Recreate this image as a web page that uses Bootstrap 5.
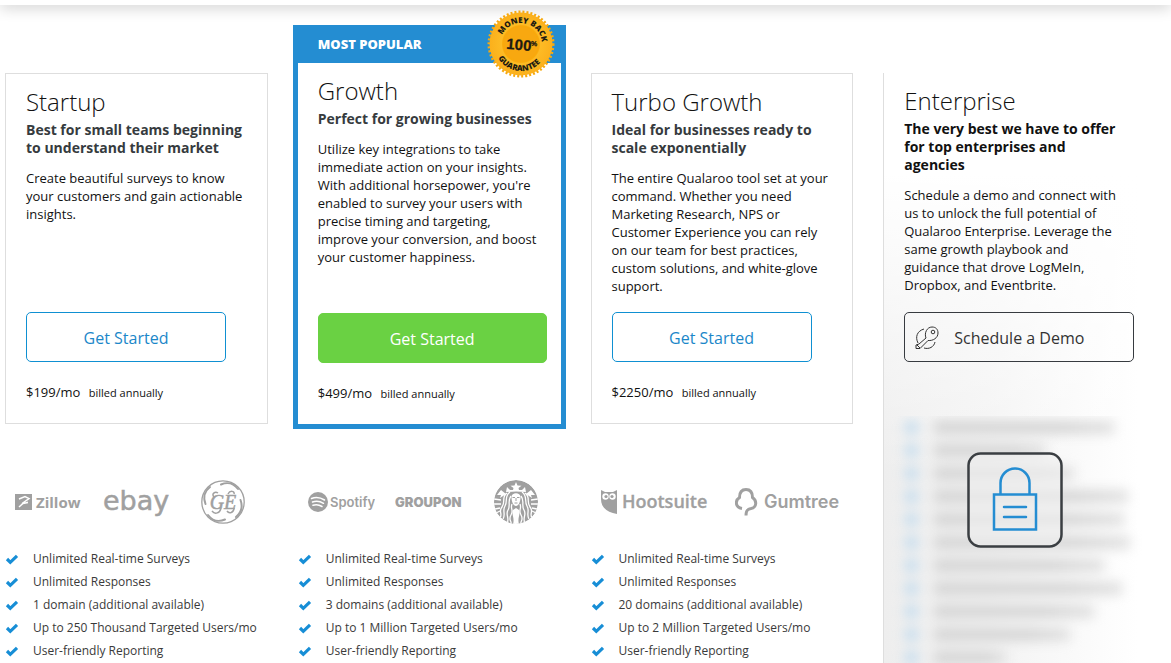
<!DOCTYPE html>
<html lang="en">
<head>
<meta charset="utf-8">
<meta name="viewport" content="width=device-width, initial-scale=1">
<title>Pricing</title>
<link href="https://cdn.jsdelivr.net/npm/bootstrap@5.3.0/dist/css/bootstrap.min.css" rel="stylesheet">
<style>
  body { font-family: "Open Sans", "Noto Sans", sans-serif; font-size: 13px; line-height: 18px; color: #111; background: #fff; }
  .top-bar { height: 5px; background: #fff; box-shadow: 0 0 15px rgba(0,0,0,.42); }
  .plans { display: grid; grid-template-columns: repeat(4, minmax(0, 1fr)); padding-top: 20px; }
  .plan-wrap { padding: 48px 25px 5px 5px; }
  .plan-wrap.popular { padding: 0 20px 0 0; }
  .plan { border: 1px solid #dedede; border-radius: 0; padding: 13px 20px 21px; color: inherit; }
  .popular .plan { border: 5px solid #248dd2; border-top: 0; padding: 0 14px 21px 20px; }
  .popular .desc { padding-right: 6px; }
  .ribbon { background: #248dd2; color: #fff; font-weight: 800; font-size: 13px; height: 38px; margin: 0 -14px 13px -20px; padding: 0 20px 1px; }
  .seal { position: absolute; top: -16px; right: 5px; width: 70px; height: 70px; }
  h2 { font-size: 24px; line-height: 30px; font-weight: 300; margin: 0 0 4px; }
  h3 { font-size: 14px; line-height: 18px; font-weight: 700; color: #363b3e; margin: 0 0 12px; }
  .desc { margin: 0 0 17px; }
  .cta { height: 50px; width: 100%; max-width: 200px; font-size: 16px; border-radius: 5px; padding: 2px 0 0; color: #1b87c9; border: 1px solid #0f90d2; background: #fff; margin-bottom: 21px; }
  .cta:hover { color: #fff; background: #248dd2; }
  .cta-go { max-width: none; color: #fff; background: #6ad143; border-color: #6ad143; font-weight: 500; }
  .billing { font-size: 11px; margin-left: 5px; }
  .perks { padding: 51px 0 1px 5px; }
  .logos { height: 44px; padding-left: 10px; margin-bottom: 23px; gap: 20px; }
  .logos svg { fill: #a0a0a0; flex: none; }
  .logos .emblem { margin-left: 11px; }
  .ticks { font-size: 12px; line-height: 23px; color: #3a3a3a; }
  .ticks li { display: flex; align-items: center; gap: 14px; }
  .enterprise { grid-column: 4; grid-row: 1 / span 2; margin: 48px 25px 0 5px; border-left: 1px solid #dedede;
    background: linear-gradient(to bottom, #fff 100px, rgba(255,255,255,0) 400px), linear-gradient(to right, #eee, #f3f3f3 40%, #fff 97%); }
  .enterprise-text { padding: 13px 12px 0 20px; }
  .enterprise h3 { color: #111; padding-right: 16px; }
  .enterprise .desc { margin-bottom: 18px; padding-right: 8px; }
  .cta-demo { max-width: 230px; margin: 0; padding-left: 10px; gap: 15px; color: #333; border-color: #373b40; background: none; }
  .cta-demo:hover { background: #373b40; }
  .locked { margin-top: 54px; overflow: hidden; min-height: 200px; }
  .ghosts { position: absolute; inset: 0 12px auto 20px; filter: blur(6px); }
  .ghost { display: flex; align-items: center; height: 23px; gap: 15px; }
  .ghost-dot { flex: none; width: 15px; height: 15px; border-radius: 50%; background: #c8deee; }
  .ghost-track { flex: 1; }
  .ghost-bar { height: 13px; background: linear-gradient(to right, #d5d5d5 70%, #e2e2e2); }
  .lock { position: absolute; top: 36px; width: 96px; height: 96px; }
  @media (max-width: 900px) {
    .plans { grid-template-columns: 1fr; }
    .perks, .plan-wrap, .enterprise { grid-column: 1; grid-row: auto; }
  }
</style>
</head>
<body>
<svg width="0" height="0" class="position-absolute" aria-hidden="true">
  <symbol id="tick" viewBox="0 0 14 12"><path d="M2 6 5.300 9.300 12 2.800" fill="none" stroke="#178ed6" stroke-width="3.200"/></symbol>
</svg>
<header class="top-bar"></header>
<main class="plans">
  <section class="plan-wrap d-flex">
    <div class="card plan w-100">
      <h2>Startup</h2>
      <h3>Best for small teams beginning to understand their market</h3>
      <p class="desc">Create beautiful surveys to know your customers and gain actionable insights.</p>
      <button type="button" class="btn cta mt-auto">Get Started</button>
      <div>$199/mo <span class="billing">billed annually</span></div>
    </div>
  </section>

  <section class="plan-wrap popular d-flex">
    <div class="card plan w-100">
      <div class="ribbon d-flex align-items-center">MOST POPULAR</div>
      <svg class="seal" viewBox="-35 -35 70 70" role="img" aria-label="100% money back guarantee">
        <defs>
          <radialGradient id="gold"><stop offset="0" stop-color="#f7a50b"/><stop offset=".58" stop-color="#f9a90c"/><stop offset=".62" stop-color="#fdbb25"/><stop offset="1" stop-color="#fbb01c"/></radialGradient>
          <path id="arcTop" d="M-21 0A21 21 0 0 1 21 0"/>
          <path id="arcLow" d="M-27 0A27 27 0 0 0 27 0"/>
        </defs>
        <circle r="32" fill="none" stroke="#f6a90f" stroke-width="3" stroke-dasharray="2 2"/>
        <circle r="31.500" fill="url(#gold)"/>
        <circle r="17" fill="#f8a810"/>
        <g fill="#1d1a12" font-weight="800" text-anchor="middle" font-size="8">
          <text transform="rotate(10)"><textPath href="#arcTop" startOffset="50%">MONEY BACK</textPath></text>
          <text transform="rotate(6)"><textPath href="#arcLow" startOffset="50%">GUARANTEE</textPath></text>
          <g transform="rotate(5)" font-family="'Liberation Sans', sans-serif" font-weight="700" stroke="#1d1a12" stroke-width=".3">
            <text x="-2" y="6" font-size="15">100</text>
            <text x="13" y="1" font-size="7">%</text>
          </g>
        </g>
      </svg>
      <h2>Growth</h2>
      <h3>Perfect for growing businesses</h3>
      <p class="desc">Utilize key integrations to take immediate action on your insights. With additional horsepower, you're enabled to survey your users with precise timing and targeting, improve your conversion, and boost your customer happiness.</p>
      <button type="button" class="btn cta cta-go mt-auto">Get Started</button>
      <div>$499/mo <span class="billing">billed annually</span></div>
    </div>
  </section>

  <section class="plan-wrap d-flex">
    <div class="card plan w-100">
      <h2>Turbo Growth</h2>
      <h3>Ideal for businesses ready to scale exponentially</h3>
      <p class="desc">The entire Qualaroo tool set at your command. Whether you need Marketing Research, NPS or Customer Experience you can rely on our team for best practices, custom solutions, and white-glove support.</p>
      <button type="button" class="btn cta mt-auto">Get Started</button>
      <div>$2250/mo <span class="billing">billed annually</span></div>
    </div>
  </section>

  <section class="enterprise d-flex flex-column">
    <div class="enterprise-text">
      <h2>Enterprise</h2>
      <h3>The very best we have to offer for top enterprises and agencies</h3>
      <p class="desc">Schedule a demo and connect with us to unlock the full potential of Qualaroo Enterprise. Leverage the same growth playbook and guidance that drove LogMeIn, Dropbox, and Eventbrite.</p>
      <button type="button" class="btn cta cta-demo d-flex align-items-center">
        <svg width="24" height="24" viewBox="0 0 24 24" fill="none" stroke="currentColor" aria-hidden="true"><path d="M11 12c-2-5 1-11 6-11 4 0 6 2.500 6 6 0 5-5 8-10 7.500L5 22.500H1V19l3-1 7-6M2 19l3 3M9 3C2 5 0 11 3 17M9 22c5 1.500 10-1 11-6"/><circle cx="18" cy="6" r="1.800"/></svg>
        <span>Schedule a Demo</span>
      </button>
    </div>
    <div class="locked position-relative flex-grow-1">
      <div class="ghosts" aria-hidden="true"></div>
      <svg class="lock start-50 translate-middle-x" viewBox="0 0 96 96" role="img" aria-label="Locked">
        <rect x="1.500" y="1.500" width="93" height="93" rx="12" fill="#f0f0f0" fill-opacity=".6" stroke="#3a3e42" stroke-width="2.500"/>
        <g fill="none" stroke="#248dd2" stroke-width="2.500"><path d="M33.500 42V31a14.500 14.500 0 0 1 29 0v11"/><rect x="27" y="42.500" width="42" height="35"/><path d="M37 55h22M37 65h22" stroke-linecap="round"/></g>
      </svg>
    </div>
  </section>

  <section class="perks">
    <div class="logos d-flex align-items-center">
      <svg width="68" height="24" viewBox="0 0 68 24"><path d="M0 4h17v16H0z"/><path d="M4 9l6-2.500 4 2-7 5 6-1M4 17l4-3.500 5-1" fill="none" stroke="#fff" stroke-width="1.500"/><text x="21" y="18" font-size="15" font-weight="700" font-family="'Open Sans', sans-serif">Zillow</text></svg>
      <svg width="67" height="44" viewBox="0 0 67 44"><text x="0" y="30" font-size="27" font-family="'DejaVu Sans', sans-serif" stroke="#a0a0a0" stroke-width=".5">ebay</text></svg>
      <svg class="emblem" width="44" height="44" viewBox="0 0 44 44" role="img" aria-label="GE"><g fill="none" stroke="#a0a0a0"><circle cx="22" cy="22" r="21.200" stroke-width="1.300"/><g stroke-width="2" stroke-linecap="round"><path d="M20 4.500C28 1 34 5 37 9"/><path d="M39.500 20c3 8-1 14-4.500 17"/><path d="M24 39.500c-8 3.500-14-.5-17-4.500"/><path d="M4.500 24C1.500 16 5 10 9 7"/></g><g stroke-width="1.500"><path d="M13 17c-3-3 1-6 4-4M11 31c3 4 8 2 9-3M33 28c0 5-5 6-7 3M33 14c1-3-4-4-6 0"/></g></g><text x="22" y="29" text-anchor="middle" font-family="'Liberation Serif', serif" font-style="italic" font-size="20" stroke="#a0a0a0" stroke-width=".5">GE</text></svg>
    </div>
    <ul class="ticks list-unstyled mb-0">
      <li><svg width="14" height="12"><use href="#tick"/></svg>Unlimited Real-time Surveys</li>
      <li><svg width="14" height="12"><use href="#tick"/></svg>Unlimited Responses</li>
      <li><svg width="14" height="12"><use href="#tick"/></svg>1 domain (additional available)</li>
      <li><svg width="14" height="12"><use href="#tick"/></svg>Up to 250 Thousand Targeted Users/mo</li>
      <li><svg width="14" height="12"><use href="#tick"/></svg>User-friendly Reporting</li>
    </ul>
  </section>

  <section class="perks">
    <div class="logos d-flex align-items-center">
      <svg width="67" height="24" viewBox="0 0 67 24"><circle cx="10" cy="12" r="10"/><path d="M3.500 8.500c4-1.500 9-1 13 1.500M4.500 12c4-1.200 8-.5 11 1.300M5 15.300c3-.8 6.500-.3 9 1.200" fill="none" stroke="#fff" stroke-width="1.500" stroke-linecap="round"/><text x="22" y="17" font-size="13" font-weight="600" font-family="Inter, sans-serif">Spotify</text></svg>
      <svg width="68" height="24" viewBox="0 0 68 24"><text x="0" y="17" font-size="13" font-weight="900" font-family="Inter, sans-serif">GROUPON</text></svg>
      <svg class="emblem" width="44" height="44" viewBox="0 0 44 44" role="img" aria-label="Starbucks">
        <defs><clipPath id="disc"><circle cx="22" cy="22" r="22"/></clipPath></defs>
        <g clip-path="url(#disc)"><circle cx="22" cy="22" r="22"/>
          <g fill="none" stroke="#fff" stroke-width="1.300">
            <path d="M16 12c-6 4-2 9-5 14s1 8-2 13M13 13c-6 4-1 9-5 14s1 6-2 11M17 16c-4 5 0 9-3 14s2 7-1 14M18 24c-2 5 2 6-1 11s1 6 0 9"/>
            <path d="M28 12c6 4 2 9 5 14s-1 8 2 13M31 13c6 4 1 9 5 14s-1 6 2 11M27 16c4 5 0 9 3 14s-2 7 1 14M26 24c2 5-2 6 1 11s-1 6 0 9"/>
            <path d="M0 19l7 1M0 24l7 0M1 29l5-1M2 33l4-2M44 19l-7 1M44 24l-7 0M43 29l-5-1M42 33l-4-2"/>
          </g>
          <path d="M22 2l1.500 3.500 4 .2-3 2.300.5 2h3l3-3 1 5-10-.5L12 12l1-5 3 3h3l.5-2-3-2.300 4-.2zM7 10l5 4-6 4 1-3-4 0zM37 10l-5 4 6 4-1-3 4 0zM17.500 17c0-5 9-5 9 0s-2 9-4.500 9-4.500-4-4.500-9zM19 30l3-2 3 2c2 4-2 8 0 14h-6c2-6-2-10 0-14z" fill="#fff"/>
          <path d="M18.500 17.500h2.500M23 17.500h2.500M22 18v3M20.500 23h3" stroke="#a0a0a0" fill="none"/>
        </g></svg>
    </div>
    <ul class="ticks list-unstyled mb-0">
      <li><svg width="14" height="12"><use href="#tick"/></svg>Unlimited Real-time Surveys</li>
      <li><svg width="14" height="12"><use href="#tick"/></svg>Unlimited Responses</li>
      <li><svg width="14" height="12"><use href="#tick"/></svg>3 domains (additional available)</li>
      <li><svg width="14" height="12"><use href="#tick"/></svg>Up to 1 Million Targeted Users/mo</li>
      <li><svg width="14" height="12"><use href="#tick"/></svg>User-friendly Reporting</li>
    </ul>
  </section>

  <section class="perks">
    <div class="logos d-flex align-items-center">
      <svg width="114" height="28" viewBox="0 0 114 28"><path d="M0 2l4 2h8l4-2v24C5 24 0 19 0 11z"/><circle cx="4.500" cy="8.500" r="3.200" fill="#fff"/><circle cx="11.500" cy="8.500" r="3.200" fill="#fff"/><circle cx="5" cy="8.500" r="1.600"/><circle cx="11" cy="8.500" r="1.600"/><path d="M6.500 11h3L8 14z"/><text x="21" y="20" font-size="18" font-weight="600" font-family="'Open Sans', sans-serif" stroke="#a0a0a0" stroke-width=".3">Hootsuite</text></svg>
      <svg width="106" height="30" viewBox="0 0 106 30"><path d="M7 21.500c-7-1-7-8-2.500-11C4.500 4 8 2.500 11 2.500s6.500 1.500 6.500 8c4.500 3 4.500 10-1.500 11-3 .4-5 1.500-5 7" fill="none" stroke="#a0a0a0" stroke-width="3"/><text x="29" y="21" font-size="18" font-weight="600" font-family="Inter, sans-serif">Gumtree</text></svg>
    </div>
    <ul class="ticks list-unstyled mb-0">
      <li><svg width="14" height="12"><use href="#tick"/></svg>Unlimited Real-time Surveys</li>
      <li><svg width="14" height="12"><use href="#tick"/></svg>Unlimited Responses</li>
      <li><svg width="14" height="12"><use href="#tick"/></svg>20 domains (additional available)</li>
      <li><svg width="14" height="12"><use href="#tick"/></svg>Up to 2 Million Targeted Users/mo</li>
      <li><svg width="14" height="12"><use href="#tick"/></svg>User-friendly Reporting</li>
    </ul>
  </section>
</main>
<script src="https://cdn.jsdelivr.net/npm/bootstrap@5.3.0/dist/js/bootstrap.bundle.min.js"></script>
<script>
  // Obscured feature rows behind the lock, one bar per row
  document.querySelector('.ghosts').innerHTML = [90, 56, 70, 97, 95, 98, 85, 94, 80, 68, 36].map(w =>
    `<div class="ghost"><div class="ghost-dot"></div><div class="ghost-track"><div class="ghost-bar" style="width:${w}%"></div></div></div>`).join('');
</script>
</body>
</html>
